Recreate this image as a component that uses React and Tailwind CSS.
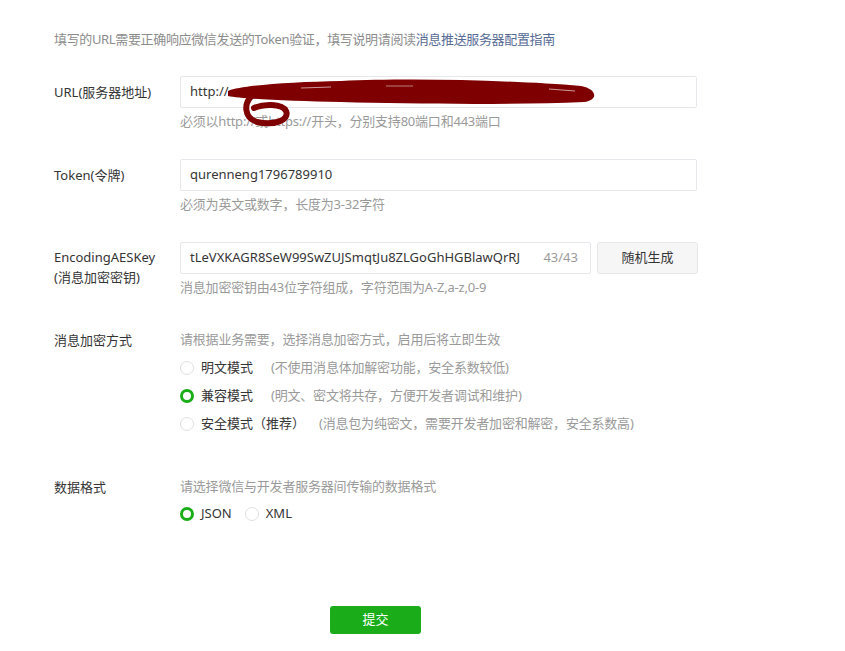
import React, { useState } from "react";

const font = { fontFamily: '"Noto Sans", "Noto Sans CJK SC", sans-serif' };

const Radio = ({ checked, onClick, children, desc, descGap = "ml-[18px]" }) => (
  <div className="flex items-center h-7 cursor-pointer" onClick={onClick}>
    {checked ? (
      <span className="w-[14px] h-[14px] rounded-full border-[3.5px] border-[#1aad19] bg-white box-border" />
    ) : (
      <span className="w-[14px] h-[14px] rounded-full border border-[#e0e0e0] bg-white box-border" />
    )}
    <span className="ml-[7px] text-[#353535]">{children}</span>
    {desc && <span className={descGap + " text-[#9a9a9a] tracking-[-0.2px]"}>{desc}</span>}
  </div>
);

// the red pen scribble that hides the url
const Scribble = () => (
  <svg
    className="absolute left-0 top-0 pointer-events-none"
    width="430"
    height="52"
    viewBox="0 0 430 52"
  >
    <path
      d="M47,14 C62,8 110,5 160,4 C230,1 330,3 400,9 C416,12 418,23 403,25 C330,28 230,27 160,25 C110,24 62,22 47,19 Z"
      fill="#7f0000"
    />
    <path
      d="M72,18 C62,26 63,41 76,45 C93,49 109,43 105,34 C101,26 82,27 73,31"
      fill="none"
      stroke="#7f0000"
      strokeWidth="6"
      strokeLinecap="round"
    />
    <path d="M120,11 L150,10" stroke="#ffffff" strokeWidth="1" opacity="0.6" />
    <path d="M205,9 L232,9" stroke="#ffffff" strokeWidth="1" opacity="0.5" />
    <path d="M368,12 L394,14" stroke="#ffffff" strokeWidth="1.2" opacity="0.6" />
  </svg>
);

const App = () => {
  const [mode, setMode] = useState(1);
  const [format, setFormat] = useState("json");

  return (
    <div className="w-[845px] h-[651px] bg-white text-[13px] pl-[54px] pt-[29px]" style={font}>
      <p className="h-5 leading-5 text-[#8d8d8d] tracking-[-0.35px]">
        填写的URL需要正确响应微信发送的Token验证，填写说明请阅读
        <a className="text-[#576b95]">消息推送服务器配置指南</a>
      </p>

      {/* URL */}
      <div className="flex mt-[27px]">
        <div className="w-[126px] leading-8 text-[#353535]">URL(服务器地址)</div>
        <div>
          <div className="relative w-[517px] h-8 border border-[#e7e7eb] rounded-[2px] flex items-center px-[9px] text-[#353535]">
            http://
            <Scribble />
          </div>
          <div className="mt-[3px] leading-5 text-[#9a9a9a] tracking-[-0.22px]">必须以http://或https://开头，分别支持80端口和443端口</div>
        </div>
      </div>

      {/* Token */}
      <div className="flex mt-[28px]">
        <div className="w-[126px] leading-8 text-[#353535]">Token(令牌)</div>
        <div>
          <div className="w-[517px] h-8 border border-[#e7e7eb] rounded-[2px] flex items-center px-[9px] text-[#353535]">
            qurenneng1796789910
          </div>
          <div className="mt-[3px] leading-5 text-[#9a9a9a] tracking-[-0.2px]">必须为英文或数字，长度为3-32字符</div>
        </div>
      </div>

      {/* AES key */}
      <div className="flex mt-[28px]">
        <div className="w-[126px] pt-[5px] leading-5 text-[#353535]">
          EncodingAESKey
          <br />
          (消息加密密钥)
        </div>
        <div>
          <div className="flex gap-[6px]">
            <div className="w-[411px] h-8 border border-[#e7e7eb] rounded-[2px] flex items-center justify-between pl-[9px] pr-[12px] text-[#353535]">
              <span>tLeVXKAGR8SeW99SwZUJSmqtJu8ZLGoGhHGBlawQrRJ</span>
              <span className="text-[#9a9a9a]">43/43</span>
            </div>
            <button className="w-[101px] h-8 border border-[#e4e8eb] rounded-[3px] bg-[#f6f6f6] text-[#353535]">
              随机生成
            </button>
          </div>
          <div className="mt-[3px] leading-5 text-[#9a9a9a] tracking-[-0.2px]">消息加密密钥由43位字符组成，字符范围为A-Z,a-z,0-9</div>
        </div>
      </div>

      {/* encrypt mode */}
      <div className="flex mt-[32px]">
        <div className="w-[126px] leading-5 pt-[1px] text-[#353535]">消息加密方式</div>
        <div>
          <div className="leading-5 text-[#9a9a9a] tracking-[-0.2px]">请根据业务需要，选择消息加密方式，启用后将立即生效</div>
          <div className="mt-[5px]">
            <Radio checked={mode === 0} onClick={() => setMode(0)} desc="(不使用消息体加解密功能，安全系数较低)">
              明文模式
            </Radio>
            <Radio checked={mode === 1} onClick={() => setMode(1)} desc="(明文、密文将共存，方便开发者调试和维护)">
              兼容模式
            </Radio>
            <Radio checked={mode === 2} onClick={() => setMode(2)} desc="(消息包为纯密文，需要开发者加密和解密，安全系数高)" descGap="ml-[14px]">
              安全模式（推荐）
            </Radio>
          </div>
        </div>
      </div>

      {/* data format */}
      <div className="flex mt-[38px]">
        <div className="w-[126px] leading-5 pt-[1px] text-[#353535]">数据格式</div>
        <div>
          <div className="leading-5 text-[#9a9a9a] tracking-[-0.2px]">请选择微信与开发者服务器间传输的数据格式</div>
          <div className="mt-[4px] flex gap-[13px]">
            <Radio checked={format === "json"} onClick={() => setFormat("json")}>JSON</Radio>
            <Radio checked={format === "xml"} onClick={() => setFormat("xml")}>XML</Radio>
          </div>
        </div>
      </div>

      <button className="mt-[78px] ml-[276px] w-[91px] h-[28px] rounded-[3px] bg-[#1aad19] text-white">
        提交
      </button>
    </div>
  );
};

export default App;
